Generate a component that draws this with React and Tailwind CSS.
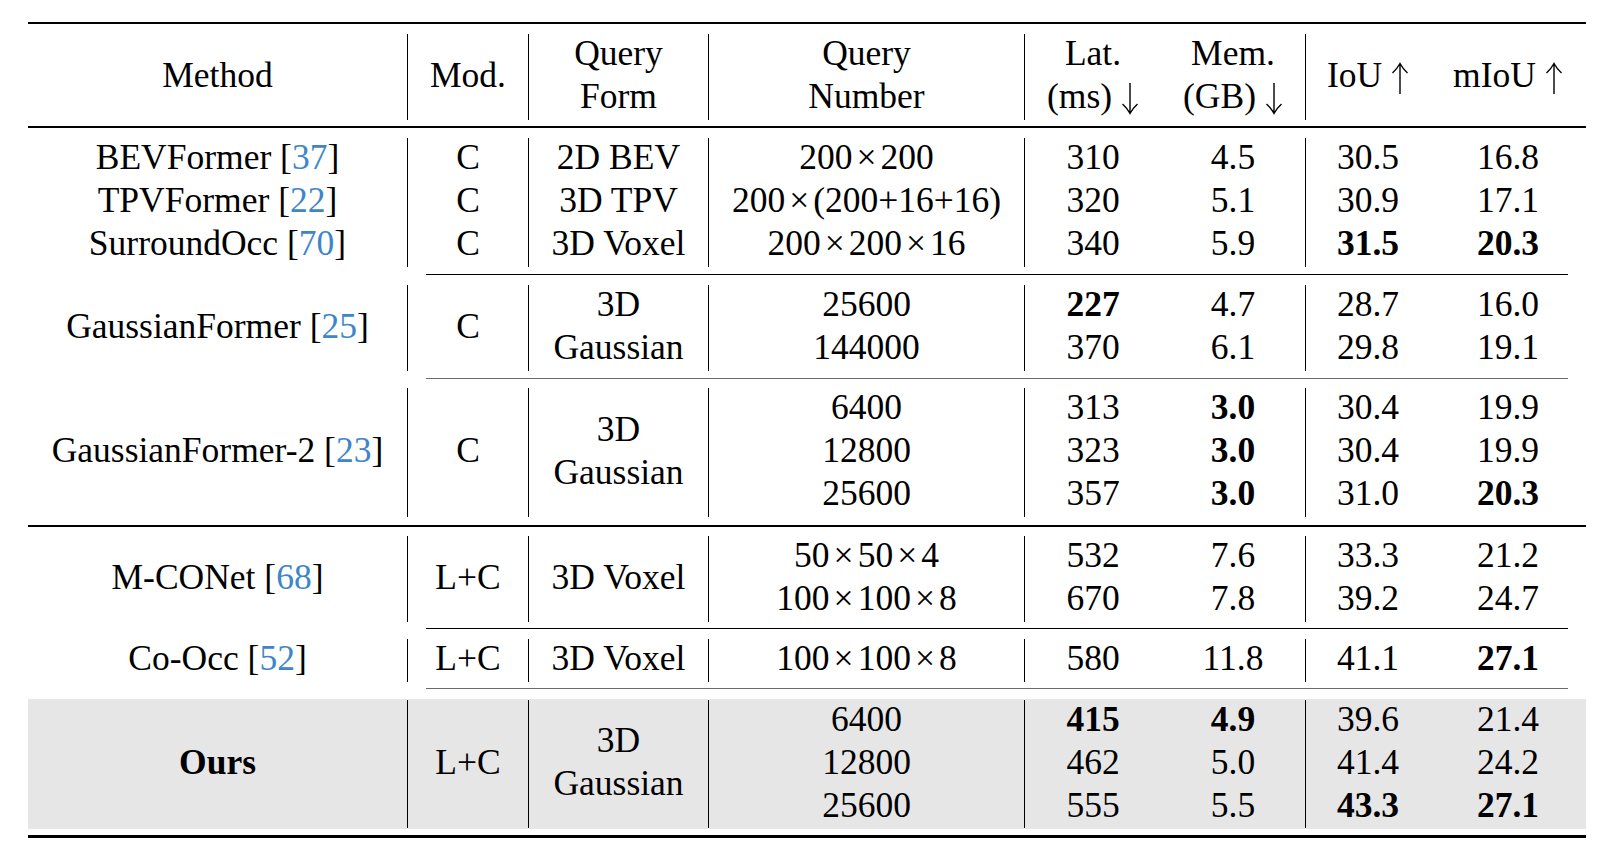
import React from 'react';

const colW = ['w-[379px]', 'w-[121px]', 'w-[180px]', 'w-[316px]', 'w-[137px]', 'w-[144px]', 'w-[125px]', 'w-[156px]'];
const bordered = [false, true, true, true, true, false, true, false];

const Cite = ({ n }) => (
  <>
    [<span className="text-[#3e86c8]">{n}</span>]
  </>
);

const X = () => <span className="mx-[4px]">×</span>;
const B = ({ children }) => <span className="font-bold">{children}</span>;

// math-style arrows, drawn since the serif font's arrows are tiny
const Up = () => (
  <svg width="18" height="32" viewBox="0 0 18 32" className="inline-block ml-[9px] align-[-7px]">
    <path d="M9 1.5V32M1.5 11Q6 7 9 1.5Q12 7 16.5 11" fill="none" stroke="black" strokeWidth="1.4" />
  </svg>
);

const Down = () => (
  <svg width="18" height="32" viewBox="0 0 18 32" className="inline-block ml-[9px] align-[-7px]">
    <path d="M9 0V30.5M1.5 21Q6 25 9 30.5Q12 25 16.5 21" fill="none" stroke="black" strokeWidth="1.4" />
  </svg>
);

const Group = ({ h, cells }) => (
  <div className={`flex ${h}`}>
    {cells.map((lines, i) => (
      <div
        key={i}
        className={`${colW[i]} ${bordered[i] ? 'border-l border-black' : ''} shrink-0 flex flex-col items-center justify-center pb-[4px]`}
      >
        {lines.map((l, j) => (
          <div key={j} className="leading-[43px] whitespace-nowrap">{l}</div>
        ))}
      </div>
    ))}
  </div>
);

const Cline = ({ gray }) => (
  <div className={`ml-[398px] w-[1142px] h-px ${gray ? 'bg-[#6a6a6a]' : 'bg-black'}`} />
);

export default function App() {
  return (
    <div className="w-[1606px] h-[854px] bg-white text-black font-['Liberation_Serif',serif] text-[35.5px] overflow-hidden">
      <div className="ml-[28px] w-[1558px] pt-[22px]">
        <div className="h-[2px] bg-black" />
        <div className="h-[10px]" />
        <Group
          h="h-[86px]"
          cells={[
            ['Method'],
            ['Mod.'],
            ['Query', 'Form'],
            ['Query', 'Number'],
            ['Lat.', <>(ms)<Down /></>],
            ['Mem.', <>(GB)<Down /></>],
            [<>IoU<Up /></>],
            [<>mIoU<Up /></>],
          ]}
        />
        <div className="h-[6px]" />
        <div className="h-[1.5px] bg-black" />
        <div className="h-[10.5px]" />

        <Group
          h="h-[129px]"
          cells={[
            [<>BEVFormer <Cite n="37" /></>, <>TPVFormer <Cite n="22" /></>, <>SurroundOcc <Cite n="70" /></>],
            ['C', 'C', 'C'],
            ['2D BEV', '3D TPV', '3D Voxel'],
            [<>200<X />200</>, <>200<X />(200+16+16)</>, <>200<X />200<X />16</>],
            ['310', '320', '340'],
            ['4.5', '5.1', '5.9'],
            ['30.5', '30.9', <B>31.5</B>],
            ['16.8', '17.1', <B>20.3</B>],
          ]}
        />
        <div className="h-[7px]" />
        <Cline />
        <div className="h-[10px]" />

        <Group
          h="h-[86px]"
          cells={[
            [<>GaussianFormer <Cite n="25" /></>],
            ['C'],
            ['3D', 'Gaussian'],
            ['25600', '144000'],
            [<B>227</B>, '370'],
            ['4.7', '6.1'],
            ['28.7', '29.8'],
            ['16.0', '19.1'],
          ]}
        />
        <div className="h-[7px]" />
        <Cline gray />
        <div className="h-[9px]" />

        <Group
          h="h-[129px]"
          cells={[
            [<>GaussianFormer-2 <Cite n="23" /></>],
            ['C'],
            ['3D', 'Gaussian'],
            ['6400', '12800', '25600'],
            ['313', '323', '357'],
            [<B>3.0</B>, <B>3.0</B>, <B>3.0</B>],
            ['30.4', '30.4', '31.0'],
            ['19.9', '19.9', <B>20.3</B>],
          ]}
        />
        <div className="h-[8px]" />
        <div className="h-[1.5px] bg-black" />
        <div className="h-[9.5px]" />

        <Group
          h="h-[86px]"
          cells={[
            [<>M-CONet <Cite n="68" /></>],
            ['L+C'],
            ['3D Voxel'],
            [<>50<X />50<X />4</>, <>100<X />100<X />8</>],
            ['532', '670'],
            ['7.6', '7.8'],
            ['33.3', '39.2'],
            ['21.2', '24.7'],
          ]}
        />
        <div className="h-[6px]" />
        <Cline />
        <div className="h-[10px]" />

        <Group
          h="h-[43px]"
          cells={[
            [<>Co-Occ <Cite n="52" /></>],
            ['L+C'],
            ['3D Voxel'],
            [<>100<X />100<X />8</>],
            ['580'],
            ['11.8'],
            ['41.1'],
            [<B>27.1</B>],
          ]}
        />
        <div className="h-[6px]" />
        <Cline gray />
        <div className="h-[10px]" />

        <div className="bg-[#e6e6e6] py-px">
          <Group
            h="h-[128px]"
            cells={[
              [<B>Ours</B>],
              ['L+C'],
              ['3D', 'Gaussian'],
              ['6400', '12800', '25600'],
              [<B>415</B>, '462', '555'],
              [<B>4.9</B>, '5.0', '5.5'],
              ['39.6', '41.4', <B>43.3</B>],
              ['21.4', '24.2', <B>27.1</B>],
            ]}
          />
        </div>
        <div className="h-[6px]" />
        <div className="h-[2.5px] bg-black" />
      </div>
    </div>
  );
}
